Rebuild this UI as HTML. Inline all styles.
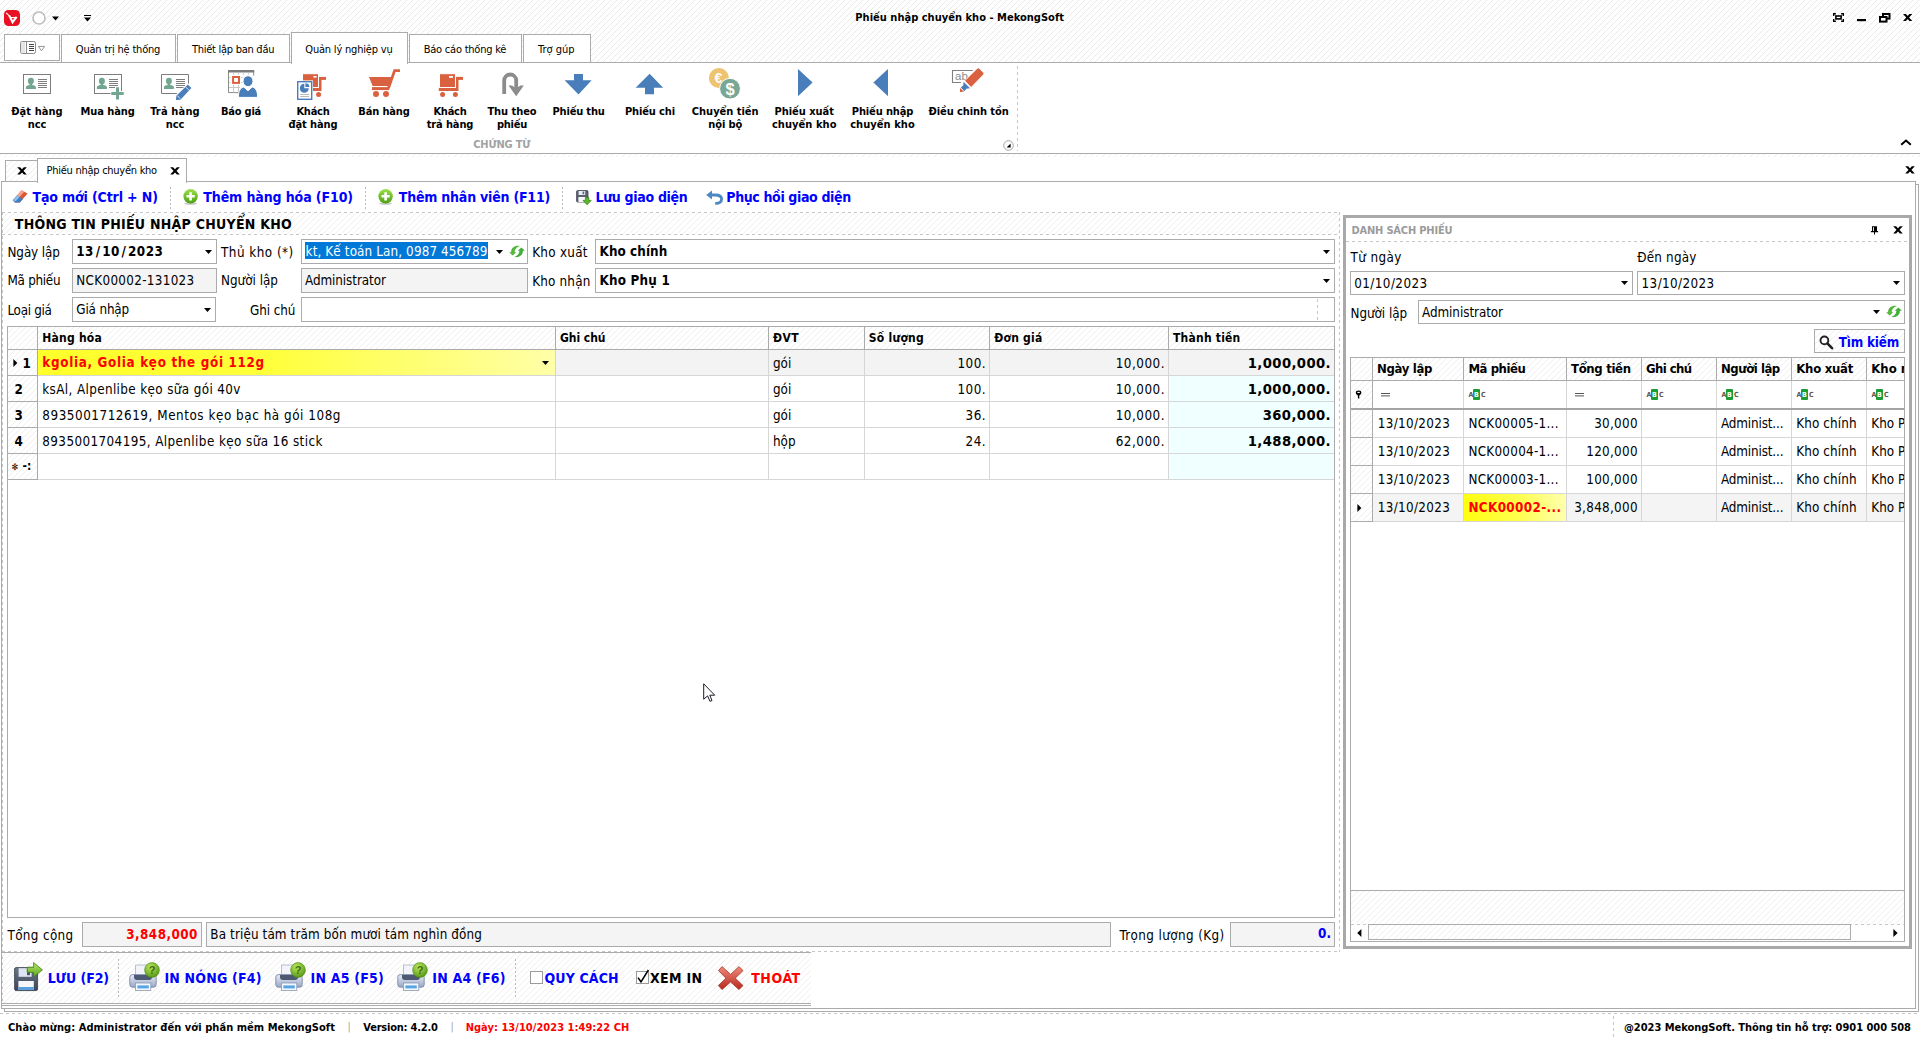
<!DOCTYPE html>
<html lang="vi">
<head>
<meta charset="utf-8">
<title>Phiếu nhập chuyển kho - MekongSoft</title>
<style>
html,body{margin:0;padding:0}
body{width:1920px;height:1039px;position:relative;overflow:hidden;background:#fff;font-family:"DejaVu Sans Condensed","DejaVu Sans","Liberation Sans",sans-serif;font-stretch:condensed;font-size:13.33px;color:#000}
body div,body svg,.t{position:absolute;box-sizing:border-box}
.t{line-height:20px;white-space:nowrap;display:block}
.t span{position:static}
.t i{font-style:normal;margin:0 1.7px}
.h{background-image:repeating-linear-gradient(135deg,transparent 0,transparent 3.18px,#e9e9e9 3.18px,#e9e9e9 3.89px,transparent 3.89px,transparent 4.2426px);background-attachment:fixed}
.h2{background-image:repeating-linear-gradient(135deg,transparent 0,transparent 3.18px,#efefef 3.18px,#efefef 3.89px,transparent 3.89px,transparent 4.2426px);background-attachment:fixed}
.vd2{width:1px;background-image:repeating-linear-gradient(180deg,#b9b9b9 0,#b9b9b9 2px,transparent 2px,transparent 4px)}
.hd{height:1px;background-image:repeating-linear-gradient(90deg,#c6c6c6 0,#c6c6c6 3px,transparent 3px,transparent 6px)}
.vd{width:1px;background-image:repeating-linear-gradient(180deg,#c6c6c6 0,#c6c6c6 3px,transparent 3px,transparent 6px)}
</style>
</head>
<body>
<header>
<div class="h" style="left:0px;top:0px;width:1920px;height:62px;"></div>
<svg style="left:4px;top:10px" width="16" height="16" viewBox="0 0 16 16"><rect x="0" y="0" width="16" height="16" rx="4.5" fill="#e81123"/><path d="M2.2 2.8l3.4 3.4" stroke="#fff" stroke-width="1.1"/><path d="M5.3 5.6l3.3 6.6 4-5.4" fill="none" stroke="#fff" stroke-width="2.1"/><path d="M6.6 7.6h4.6" stroke="#fff" stroke-width="1.1"/></svg>
<svg style="left:31px;top:10px" width="64" height="16" viewBox="0 0 64 16"><circle cx="8" cy="8" r="6" fill="#fff" stroke="#bdbdbd" stroke-width="1.6"/><path d="M21 6.5h7l-3.5 4z" fill="#000"/><path d="M53 5h7v1h-7zM53 7.5h7l-3.5 4z" fill="#000"/></svg>
<span class="t" id="t1" style="top:8px;font-size:11px;font-weight:bold;letter-spacing:0.022px;left:855.3px;">Phiếu nhập chuyển kho - MekongSoft</span>
<svg style="left:1830px;top:11px" width="84" height="13" viewBox="0 0 84 13"><g fill="none" stroke="#000" stroke-width="1.4"><path d="M3.7 4.9V2.7H5.9M11.1 2.7h2.2v2.2M3.7 8.1v2.2H5.9M11.1 10.3h2.2V8.1"/><rect x="5.9" y="5" width="5.2" height="2.9" stroke-width="1.6"/></g>
<rect x="27" y="8" width="9" height="2.2" fill="#000"/>
<g fill="none" stroke="#000" stroke-width="2"><rect x="53" y="3" width="6.5" height="4.6"/><rect x="50" y="6" width="6.5" height="4.6" fill="#fff"/></g>
<path d="M73 2.9h2.9l6.4 7.2h-2.9z"/><path d="M82.3 2.9h-2.9l-6.4 7.2h2.9z"/></svg>
</header>
<nav>
<div style="left:0px;top:62px;width:1920px;height:92px;background-color:#fff;border:1px solid #ababab;border-left:none;border-right:none;"></div>
<div style="left:4px;top:34px;width:56px;height:27px;background-color:#fff;border:1px solid #ababab;"></div>
<svg style="left:20px;top:41px" width="28" height="14" viewBox="0 0 28 14"><rect x="0.5" y="0.5" width="15" height="12" rx="1.8" fill="#fff" stroke="#8a8a8a"/><rect x="1" y="1" width="4" height="11" fill="#e6e6e6"/><path d="M6.5 1v11" stroke="#8a8a8a"/><path d="M9 3.5h5M9 5.5h5M9 7.5h5M9 9.5h5" stroke="#444" stroke-width="1"/><path d="M18.4 5.4h6.2l-3.1 4.4z" fill="#fff" stroke="#8a8a8a" stroke-width="0.9"/></svg>
<div style="left:61px;top:34px;width:115px;height:29px;background-color:#fff;border:1px solid #ababab;"></div>
<span class="t" id="t2" style="top:40px;font-size:11px;letter-spacing:-0.192px;left:75.8px;">Quản trị hệ thống</span>
<div style="left:177px;top:34px;width:113px;height:29px;background-color:#fff;border:1px solid #ababab;"></div>
<span class="t" id="t3" style="top:40px;font-size:11px;letter-spacing:-0.265px;left:191.9px;">Thiết lập ban đầu</span>
<div style="left:409px;top:34px;width:113px;height:29px;background-color:#fff;border:1px solid #ababab;"></div>
<span class="t" id="t4" style="top:40px;font-size:11px;letter-spacing:-0.225px;left:423.7px;">Báo cáo thống kê</span>
<div style="left:523px;top:34px;width:68px;height:29px;background-color:#fff;border:1px solid #ababab;"></div>
<span class="t" id="t5" style="top:40px;font-size:11px;left:538px;">Trợ gúp</span>
<div style="left:291px;top:32px;width:117px;height:32px;background-color:#fff;border:1px solid #ababab;border-bottom:none;"></div>
<span class="t" id="t6" style="top:40px;font-size:11px;letter-spacing:-0.195px;left:305.3px;">Quản lý nghiệp vụ</span>
<svg style="left:23px;top:74px" width="28" height="20" viewBox="0 0 28 20"><rect x="0.5" y="0.5" width="27" height="19" fill="#fff" stroke="#7d7d7d"/><ellipse cx="7.9" cy="7" rx="3" ry="3.2" fill="#73a691"/><path d="M6.6 9.4h2.6v1.6c2.2.3 3.7 1 3.7 2.2v1.7H2.9v-1.7c0-1.2 1.5-1.9 3.7-2.2z" fill="#73a691"/><path d="M15 5.5h9M15 7.5h9M15 9.5h9M15 11.5h9M15 13.5h9" stroke="#7d7d7d" stroke-width="1"/></svg>
<svg style="left:94px;top:74px" width="32" height="27" viewBox="0 0 32 27"><rect x="0.5" y="0.5" width="27" height="19" fill="#fff" stroke="#7d7d7d"/><ellipse cx="7.9" cy="7" rx="3" ry="3.2" fill="#73a691"/><path d="M6.6 9.4h2.6v1.6c2.2.3 3.7 1 3.7 2.2v1.7H2.9v-1.7c0-1.2 1.5-1.9 3.7-2.2z" fill="#73a691"/><path d="M15 5.5h9M15 7.5h9M15 9.5h9M15 11.5h9M15 13.5h9" stroke="#7d7d7d" stroke-width="1"/><path d="M16.5 19.4h14M23.5 12.4v14" stroke="#fff" stroke-width="5"/><path d="M17.3 19.4h12.4M23.5 13.2v12.4" stroke="#73a691" stroke-width="3"/></svg>
<svg style="left:161px;top:74px" width="32" height="27" viewBox="0 0 32 27"><path d="M27.5 9.6V0.5H0.5v19h16" fill="none" stroke="#7d7d7d"/><ellipse cx="7.9" cy="7" rx="3" ry="3.2" fill="#73a691"/><path d="M6.6 9.4h2.6v1.6c2.2.3 3.7 1 3.7 2.2v1.7H2.9v-1.7c0-1.2 1.5-1.9 3.7-2.2z" fill="#73a691"/><path d="M15 5.5h9M15 7.5h9M15 9.5h9M15 11.5h9M15 13.5h9" stroke="#7d7d7d" stroke-width="1"/><path d="M26.6 9.4l5 4.8L19.6 27l-6.2.4.6-6z" fill="#fff"/><path d="M26.9 10.6l3.5 3.3-11 11.8-4.5.4.5-4.4z" fill="#4a7ebb"/><path d="M24.9 13.2l3 3M16.3 21.6l3 3.1" stroke="#fff" stroke-width="0.8"/></svg>
<svg style="left:228px;top:70px" width="30" height="28" viewBox="0 0 30 28"><path d="M25.7 5.6V1H0.5v21.6h11.4" fill="none" stroke="#8c8c8c"/><rect x="0" y="0" width="26.2" height="2.5" fill="#7d7d7d"/><path d="M1 17.5h11M5.5 15v7.5M10.5 15v7.5" stroke="#c8c8c8" stroke-width="1"/><path d="M5.5 3v1.6M10.5 3v1.6M15.5 3v1.6M20.5 3v1.6M1 7.5h1.6M1 12.5h1.6M13 7.5h1.4M13 12.5h1.4" stroke="#c0c0c0" stroke-width="0.8"/><rect x="5.1" y="7" width="5.9" height="5.9" fill="#fff" stroke="#d9613f" stroke-width="2"/><path d="M10.6 27.4c-.6-6 1.6-9.4 5.2-10.4l4.2 3.8 4.2-3.8c3.6 1 5.8 4.4 5.2 10.4z" fill="#4a7ebb" stroke="#fff" stroke-width="1"/><ellipse cx="20" cy="11.2" rx="5" ry="5.5" fill="#4a7ebb" stroke="#fff" stroke-width="1"/></svg>
<svg style="left:297px;top:73px" width="32" height="28" viewBox="0 0 32 28"><path d="M21 5.4h8" stroke="#d9613f" stroke-width="3"/><path d="M23 4v14M16 16.5h8.5" stroke="#d9613f" stroke-width="3"/><rect x="5.5" y="0.7" width="16" height="13.8" fill="#d9613f" stroke="#fff" stroke-width="1"/><rect x="16.5" y="3" width="3" height="1.6" fill="#fff"/><circle cx="21.6" cy="21.6" r="2.5" fill="#d9613f"/><rect x="-0.6" y="7.4" width="16.6" height="20.2" fill="#fff"/><rect x="0.7" y="8.7" width="14" height="17.6" fill="#fff" stroke="#4a7ebb" stroke-width="1.4"/><path d="M7.3 15.2V10.7a4.5 4.5 0 1 0 4.5 4.5z" fill="#4a7ebb"/><path d="M8.4 14.1V10.2a4 4 0 0 1 4 3.9z" fill="#4a7ebb"/><path d="M3.2 21.5h9M3.2 23.5h9" stroke="#bbb" stroke-width="1"/></svg>
<svg style="left:368px;top:68px" width="34" height="30" viewBox="0 0 34 30"><path d="M1 9h24l-3.6 9H4.6z" fill="#d9613f"/><path d="M32 2.6h-5.4L20.4 20.2" fill="none" stroke="#d9613f" stroke-width="2.8"/><path d="M4 20.6h17.2" stroke="#d9613f" stroke-width="3"/><circle cx="8" cy="26" r="3" fill="#d9613f"/><circle cx="18" cy="26" r="3" fill="#d9613f"/></svg>
<svg style="left:438px;top:73px" width="28" height="26" viewBox="0 0 28 26"><path d="M17 5.4h8" stroke="#d9613f" stroke-width="3"/><path d="M19 4v14M0.8 16.5h19.7" stroke="#d9613f" stroke-width="3"/><rect x="1.5" y="0.7" width="16" height="13.8" fill="#d9613f" stroke="#fff" stroke-width="1"/><rect x="11" y="3" width="4" height="1.8" fill="#fff"/><circle cx="4.6" cy="21.6" r="2.5" fill="#d9613f"/><circle cx="17.4" cy="21.6" r="2.5" fill="#d9613f"/></svg>
<svg style="left:500px;top:70px" width="26" height="28" viewBox="0 0 26 28"><path d="M4.2 24V10.5a6 6 0 0 1 12 0V19" fill="none" stroke="#8c8c8c" stroke-width="3.8"/><path d="M8.6 15.4h3.4l4.2 3.2 4.2-3.2h3.4l-7.6 10.8z" fill="#8c8c8c"/></svg>
<svg style="left:564px;top:73px" width="30" height="23" viewBox="0 0 30 23"><path d="M10 1h9v6.3h8.6L14.5 21.4 0.6 7.3H10z" fill="#4a7ebb"/></svg>
<svg style="left:635px;top:73px" width="30" height="23" viewBox="0 0 30 23"><path d="M14.6 0.8L28.2 14.8H19v6.4h-9v-6.4H0.6z" fill="#4a7ebb"/></svg>
<svg style="left:708px;top:67px" width="34" height="33" viewBox="0 0 34 33"><circle cx="10.9" cy="11" r="10" fill="#eec26e"/><text x="10.4" y="15.6" font-family="Liberation Sans,sans-serif" font-weight="bold" font-size="14" fill="#fff" text-anchor="middle">€</text><circle cx="22" cy="21.7" r="10.4" fill="#78a795" stroke="#fff" stroke-width="1"/><text x="22" y="27.5" font-family="Liberation Sans,sans-serif" font-weight="bold" font-size="16.5" fill="#fff" text-anchor="middle">$</text></svg>
<svg style="left:797px;top:68px" width="17" height="30" viewBox="0 0 17 30"><path d="M1 1L15.6 14.6 1 28.3z" fill="#4a7ebb"/></svg>
<svg style="left:872px;top:68px" width="17" height="30" viewBox="0 0 17 30"><path d="M16 1L1.4 14.6 16 28.3z" fill="#4a7ebb"/></svg>
<svg style="left:951px;top:66px" width="36" height="28" viewBox="0 0 36 28"><path d="M21.8 4.5H1.5v12h8.4" fill="none" stroke="#808080" stroke-width="1.1"/><text x="4" y="13.8" font-family="Liberation Sans,sans-serif" font-size="11.5" fill="#8a8a8a">ab</text><path d="M26.2 2.4a1.6 1.6 0 0 1 2.2 0l4 4.2a1.6 1.6 0 0 1 0 2.2L20.1 21.4 13.6 14.8z" fill="#d9613f" stroke="#fff" stroke-width="0.8"/><path d="M12.6 15.8l6.4 6.5-3.6 0.4-2 2.6-3.6-3.7 2.4-2z" fill="#4a7ebb"/><path d="M9 21.9l4 3.9-4 0.2z" fill="#d9613f"/></svg>
<span class="t" style="top:102px;font-size:11px;font-weight:bold;letter-spacing:0.062px;left:-163px;width:400px;text-align:center;"><span id="t7">Đặt hàng</span></span>
<span class="t" style="top:115px;font-size:11px;font-weight:bold;letter-spacing:-0.060px;left:-163px;width:400px;text-align:center;"><span id="t8">ncc</span></span>
<span class="t" style="top:102px;font-size:11px;font-weight:bold;letter-spacing:-0.109px;left:-92.4px;width:400px;text-align:center;"><span id="t9">Mua hàng</span></span>
<span class="t" style="top:102px;font-size:11px;font-weight:bold;letter-spacing:0.162px;left:-25px;width:400px;text-align:center;"><span id="t10">Trả hàng</span></span>
<span class="t" style="top:115px;font-size:11px;font-weight:bold;letter-spacing:-0.060px;left:-25px;width:400px;text-align:center;"><span id="t11">ncc</span></span>
<span class="t" style="top:102px;font-size:11px;font-weight:bold;letter-spacing:-0.232px;left:41px;width:400px;text-align:center;"><span id="t12">Báo giá</span></span>
<span class="t" style="top:102px;font-size:11px;font-weight:bold;letter-spacing:-0.222px;left:113px;width:400px;text-align:center;"><span id="t13">Khách</span></span>
<span class="t" style="top:115px;font-size:11px;font-weight:bold;letter-spacing:-0.087px;left:113px;width:400px;text-align:center;"><span id="t14">đặt hàng</span></span>
<span class="t" style="top:102px;font-size:11px;font-weight:bold;letter-spacing:-0.145px;left:184px;width:400px;text-align:center;"><span id="t15">Bán hàng</span></span>
<span class="t" style="top:102px;font-size:11px;font-weight:bold;letter-spacing:-0.222px;left:250px;width:400px;text-align:center;"><span id="t16">Khách</span></span>
<span class="t" style="top:115px;font-size:11px;font-weight:bold;letter-spacing:-0.124px;left:250px;width:400px;text-align:center;"><span id="t17">trả hàng</span></span>
<span class="t" style="top:102px;font-size:11px;font-weight:bold;letter-spacing:-0.049px;left:312px;width:400px;text-align:center;"><span id="t18">Thu theo</span></span>
<span class="t" style="top:115px;font-size:11px;font-weight:bold;letter-spacing:-0.256px;left:312px;width:400px;text-align:center;"><span id="t19">phiếu</span></span>
<span class="t" style="top:102px;font-size:11px;font-weight:bold;letter-spacing:-0.169px;left:378.6px;width:400px;text-align:center;"><span id="t20">Phiếu thu</span></span>
<span class="t" style="top:102px;font-size:11px;font-weight:bold;letter-spacing:-0.134px;left:450px;width:400px;text-align:center;"><span id="t21">Phiếu chi</span></span>
<span class="t" style="top:102px;font-size:11px;font-weight:bold;letter-spacing:-0.019px;left:525.2px;width:400px;text-align:center;"><span id="t22">Chuyển tiền</span></span>
<span class="t" style="top:115px;font-size:11px;font-weight:bold;letter-spacing:-0.146px;left:525.2px;width:400px;text-align:center;"><span id="t23">nội bộ</span></span>
<span class="t" style="top:102px;font-size:11px;font-weight:bold;letter-spacing:-0.043px;left:604.2px;width:400px;text-align:center;"><span id="t24">Phiếu xuất</span></span>
<span class="t" style="top:115px;font-size:11px;font-weight:bold;letter-spacing:0.055px;left:604.2px;width:400px;text-align:center;"><span id="t25">chuyển kho</span></span>
<span class="t" style="top:102px;font-size:11px;font-weight:bold;letter-spacing:-0.125px;left:682.5px;width:400px;text-align:center;"><span id="t26">Phiếu nhập</span></span>
<span class="t" style="top:115px;font-size:11px;font-weight:bold;letter-spacing:0.055px;left:682.5px;width:400px;text-align:center;"><span id="t27">chuyển kho</span></span>
<span class="t" style="top:102px;font-size:11px;font-weight:bold;letter-spacing:-0.079px;left:768.6px;width:400px;text-align:center;"><span id="t28">Điều chinh tồn</span></span>
<span class="t" id="t29" style="top:135px;font-size:11px;font-weight:bold;color:#a2a2a2;letter-spacing:-0.211px;left:473.3px;">CHỨNG TỪ</span>
<svg style="left:1003px;top:140px" width="11" height="11" viewBox="0 0 11 11"><circle cx="5.5" cy="5.5" r="4.8" fill="#fff" stroke="#9a9a9a" stroke-width="0.9"/><path d="M7.6 3.6v4H3.6z" fill="#000"/></svg>
<div class="vd" style="left:1017px;top:66px;height:85px;"></div>
<svg style="left:1900px;top:139px" width="12" height="7" viewBox="0 0 12 7"><path d="M1.2 5.8L6 1.6l4.8 4.2" fill="none" stroke="#000" stroke-width="2"/></svg>
</nav>
<main>
<div class="h2" style="left:0px;top:154px;width:1920px;height:3px;"></div>
<div style="left:1px;top:181px;width:1915px;height:1px;background:#ababab"></div>
<div class="h2" style="left:5px;top:160px;width:33px;height:22px;background-color:#fff;border:1px solid #ababab;"></div>
<div style="left:37px;top:158px;width:150px;height:25px;background-color:#fff;border:1px solid #ababab;border-bottom:none;"></div>
<svg style="left:17px;top:167px" width="10" height="8" viewBox="0 0 10 8"><path d="M0.2 0.2H3.1L9.8 7.6H6.9Z"/><path d="M9.8 0.2H6.9L0.2 7.6H3.1Z"/></svg>
<svg style="left:170px;top:167px" width="10" height="8" viewBox="0 0 10 8"><path d="M0.2 0.2H3.1L9.8 7.6H6.9Z"/><path d="M9.8 0.2H6.9L0.2 7.6H3.1Z"/></svg>
<svg style="left:1905px;top:166px" width="10" height="8" viewBox="0 0 10 8"><path d="M0.2 0.2H3.1L9.8 7.6H6.9Z"/><path d="M9.8 0.2H6.9L0.2 7.6H3.1Z"/></svg>
<span class="t" id="t30" style="top:161px;font-size:11px;letter-spacing:-0.264px;left:46.5px;">Phiếu nhập chuyển kho</span>
<div style="left:1px;top:181px;width:1px;height:828px;background:#ababab"></div>
<div style="left:1915px;top:181px;width:1px;height:828px;background:#ababab"></div>
<div style="left:1px;top:1008px;width:1915px;height:1px;background:#ababab"></div>
<div style="left:1918px;top:184px;width:1px;height:828px;background:#ababab"></div>
<div style="left:4px;top:1011px;width:1915px;height:1px;background:#ababab"></div>
<div style="left:4px;top:1008px;width:1px;height:4px;background:#ababab"></div>
<div style="left:1915px;top:184px;width:4px;height:1px;background:#ababab"></div>
<svg style="left:12px;top:189px" width="17" height="15" viewBox="0 0 17 15"><path d="M9.6 1.2L15.6 4.6 7.8 13.4 3 13.6 0.8 11.2z" fill="#d9583c"/><path d="M9.6 1.2l2.6 1.5-8.4 9.6-3-1.1z" fill="#f3a58e"/><path d="M5 6.6l6 3.4-3.2 3.4L3 13.6 0.8 11.2z" fill="#3f7fc4"/><path d="M5 6.6l2.5 1.4-3.8 4.3-2.9-1.1z" fill="#8cc0ee"/></svg>
<span class="t" id="t31" style="top:187px;font-size:14px;font-weight:bold;color:#0000ff;letter-spacing:-0.137px;left:32.5px;">Tạo mới (Ctrl + N)</span>
<div class="vd2" style="left:170px;top:187px;height:22px;"></div>
<svg style="left:183px;top:189px" width="16" height="16" viewBox="0 0 16 16"><defs><linearGradient id="gp183" x1="0" y1="0" x2="0" y2="1"><stop offset="0" stop-color="#9be04a"/><stop offset="1" stop-color="#4c9f12"/></linearGradient></defs><ellipse cx="7.6" cy="14.6" rx="6.4" ry="1.2" fill="#c8c8c8"/><circle cx="7.6" cy="7.3" r="7.2" fill="url(#gp183)"/><path d="M7.6 3.2v8.2M3.5 7.3h8.2" stroke="#fff" stroke-width="2.6"/></svg>
<span class="t" id="t32" style="top:187px;font-size:14px;font-weight:bold;color:#0000ff;letter-spacing:-0.100px;left:203.3px;">Thêm hàng hóa (F10)</span>
<div class="vd2" style="left:365px;top:187px;height:22px;"></div>
<svg style="left:378px;top:189px" width="16" height="16" viewBox="0 0 16 16"><defs><linearGradient id="gp378" x1="0" y1="0" x2="0" y2="1"><stop offset="0" stop-color="#9be04a"/><stop offset="1" stop-color="#4c9f12"/></linearGradient></defs><ellipse cx="7.6" cy="14.6" rx="6.4" ry="1.2" fill="#c8c8c8"/><circle cx="7.6" cy="7.3" r="7.2" fill="url(#gp378)"/><path d="M7.6 3.2v8.2M3.5 7.3h8.2" stroke="#fff" stroke-width="2.6"/></svg>
<span class="t" id="t33" style="top:187px;font-size:14px;font-weight:bold;color:#0000ff;letter-spacing:-0.213px;left:398.8px;">Thêm nhân viên (F11)</span>
<div class="vd2" style="left:562px;top:187px;height:22px;"></div>
<svg style="left:576px;top:190px" width="16" height="15" viewBox="0 0 16 15"><rect x="0.6" y="0.6" width="11.4" height="11.4" rx="1" fill="#5a6270" stroke="#3d4450" stroke-width="0.8"/><rect x="2.6" y="1" width="6.6" height="4" fill="#e8edf5"/><rect x="6.6" y="1.6" width="1.6" height="2.6" fill="#5a6270"/><rect x="2.4" y="7" width="7.6" height="5" fill="#f4f6fa"/><path d="M9.4 7.4h3.4v3h2.4l-4.1 4.4L7 10.4h2.4z" fill="#5cb82a" stroke="#2f7d0c" stroke-width="0.7"/></svg>
<span class="t" id="t34" style="top:187px;font-size:14px;font-weight:bold;color:#0000ff;letter-spacing:-0.312px;left:595.5px;">Lưu giao diện</span>
<svg style="left:705px;top:190px" width="18" height="15" viewBox="0 0 18 15"><path d="M1.2 5L7 0.4V9.6z" fill="#4d88c4"/><path d="M6 5h4.6c4 0 6 2 6 4.3 0 2.5-2.2 4.2-6.4 4" fill="none" stroke="#4d88c4" stroke-width="2.8"/></svg>
<span class="t" id="t35" style="top:187px;font-size:14px;font-weight:bold;color:#0000ff;letter-spacing:-0.364px;left:726.3px;">Phục hồi giao diện</span>
<div class="hd" style="left:2px;top:212px;width:1338px;"></div>
<div class="vd" style="left:1339px;top:212px;height:740px;"></div>
<div class="vd" style="left:2px;top:212px;height:792px;"></div>
<div class="hd" style="left:2px;top:234px;width:1338px;"></div>
<div class="h2" style="left:3px;top:213px;width:1336px;height:21px;"></div>
<span class="t" id="t36" style="top:214px;font-size:14px;font-weight:bold;letter-spacing:0.262px;left:14.8px;">THÔNG TIN PHIẾU NHẬP CHUYỂN KHO</span>
<span class="t" id="t37" style="top:243px;font-size:13.33px;letter-spacing:-0.103px;left:7.5px;">Ngày lập</span>
<div style="left:72px;top:239px;width:145px;height:25px;background-color:#fff;border:1px solid #ababab;"></div>
<span class="t" id="t38" style="top:242px;font-size:13.33px;font-weight:bold;letter-spacing:0.472px;left:76.3px;">13<i>/</i>10<i>/</i>2023</span>
<svg style="left:205px;top:250px" width="7" height="4" viewBox="0 0 7 4"><path d="M0 0h7l-3.5 4z" fill="#000"/></svg>
<span class="t" id="t39" style="top:243px;font-size:13.33px;letter-spacing:0.484px;left:221px;">Thủ kho (*)</span>
<div style="left:301px;top:239px;width:227px;height:25px;background-color:#fff;border:1px solid #ababab;"></div>
<div style="left:305px;top:242px;width:183px;height:17px;background-color:#0078d7;"></div>
<span class="t" id="t40" style="top:242px;font-size:13.33px;color:#fff;letter-spacing:0.129px;left:305.6px;width:182.4px;overflow:hidden;">kt, Kế toán Lan, 0987 456789</span>
<svg style="left:496px;top:250px" width="7" height="4" viewBox="0 0 7 4"><path d="M0 0h7l-3.5 4z" fill="#000"/></svg>
<svg style="left:509px;top:245px" width="16" height="13" viewBox="0 0 16 13"><path d="M10.9 1C6 0.2 2 2.6 2.1 7.2H0.1L3.6 10.6 7.3 7.2H5.6C5.6 4.4 7.6 2 10.9 1Z" fill="#55b63c"/><path d="M5.1 12C10 12.8 14 10.4 13.9 5.8H15.9L12.4 2.4 8.7 5.8H10.4C10.4 8.6 8.4 11 5.1 12Z" fill="#43ae3c"/></svg>
<span class="t" id="t41" style="top:243px;font-size:13.33px;letter-spacing:0.280px;left:532.2px;">Kho xuất</span>
<div style="left:595px;top:239px;width:740px;height:25px;background-color:#fff;border:1px solid #ababab;"></div>
<span class="t" id="t42" style="top:242px;font-size:13.33px;font-weight:bold;letter-spacing:0.069px;left:599.6px;">Kho chính</span>
<svg style="left:1323px;top:250px" width="7" height="4" viewBox="0 0 7 4"><path d="M0 0h7l-3.5 4z" fill="#000"/></svg>
<span class="t" id="t43" style="top:271px;font-size:13.33px;letter-spacing:-0.291px;left:7.5px;">Mã phiếu</span>
<div style="left:72px;top:268px;width:145px;height:25px;background-color:#f4f4f4;border:1px solid #ababab;"></div>
<span class="t" id="t44" style="top:271px;font-size:13.33px;letter-spacing:0.318px;left:76.3px;">NCK00002-131023</span>
<span class="t" id="t45" style="top:271px;font-size:13.33px;left:221px;">Người lập</span>
<div style="left:301px;top:268px;width:227px;height:25px;background-color:#f4f4f4;border:1px solid #ababab;"></div>
<span class="t" id="t46" style="top:271px;font-size:13.33px;letter-spacing:-0.071px;left:305px;">Administrator</span>
<span class="t" id="t47" style="top:272px;font-size:13.33px;letter-spacing:0.192px;left:532.2px;">Kho nhận</span>
<div style="left:595px;top:268px;width:740px;height:25px;background-color:#fff;border:1px solid #ababab;"></div>
<span class="t" id="t48" style="top:271px;font-size:13.33px;font-weight:bold;letter-spacing:0.197px;left:599.6px;">Kho Phụ 1</span>
<svg style="left:1323px;top:279px" width="7" height="4" viewBox="0 0 7 4"><path d="M0 0h7l-3.5 4z" fill="#000"/></svg>
<span class="t" id="t49" style="top:301px;font-size:13.33px;letter-spacing:-0.320px;left:7.5px;">Loại giá</span>
<div style="left:72px;top:297px;width:144px;height:25px;background-color:#fff;border:1px solid #ababab;"></div>
<span class="t" id="t50" style="top:300px;font-size:13.33px;letter-spacing:-0.157px;left:76.3px;">Giá nhập</span>
<svg style="left:204px;top:308px" width="7" height="4" viewBox="0 0 7 4"><path d="M0 0h7l-3.5 4z" fill="#000"/></svg>
<span class="t" id="t51" style="top:301px;font-size:13.33px;letter-spacing:-0.078px;left:250px;">Ghi chú</span>
<div style="left:301px;top:297px;width:1034px;height:25px;background-color:#fff;border:1px solid #ababab;"></div>
<div class="vd" style="left:1317px;top:299px;height:21px;"></div>
<div style="left:7px;top:326px;width:1328px;height:592px;background-color:#fff;border:1px solid #ababab;"></div>
<div class="h2" style="left:8px;top:327px;width:1326px;height:22px;"></div>
<div class="h2" style="left:8px;top:350px;width:29px;height:129px;"></div>
<div style="left:38px;top:350px;width:1296px;height:25px;background-color:#f3f3f3;"></div>
<div style="left:1169px;top:376px;width:165px;height:103px;background-color:#f0ffff;"></div>
<div style="left:38px;top:350px;width:517px;height:25px;background:linear-gradient(90deg,#ffff2a 0%,#ffff3c 45%,#ffffa8 100%);"></div>
<div style="left:8px;top:375px;width:1326px;height:1px;background:#d6d6d6"></div>
<div style="left:8px;top:401px;width:1326px;height:1px;background:#d6d6d6"></div>
<div style="left:8px;top:427px;width:1326px;height:1px;background:#d6d6d6"></div>
<div style="left:8px;top:453px;width:1326px;height:1px;background:#d6d6d6"></div>
<div style="left:8px;top:479px;width:1326px;height:1px;background:#d6d6d6"></div>
<div style="left:555px;top:350px;width:1px;height:130px;background:#d6d6d6"></div>
<div style="left:768px;top:350px;width:1px;height:130px;background:#d6d6d6"></div>
<div style="left:864px;top:350px;width:1px;height:130px;background:#d6d6d6"></div>
<div style="left:989px;top:350px;width:1px;height:130px;background:#d6d6d6"></div>
<div style="left:1168px;top:350px;width:1px;height:130px;background:#d6d6d6"></div>
<div style="left:8px;top:349px;width:1326px;height:1px;background:#ababab"></div>
<div style="left:37px;top:327px;width:1px;height:153px;background:#ababab"></div>
<div style="left:555px;top:327px;width:1px;height:23px;background:#ababab"></div>
<div style="left:768px;top:327px;width:1px;height:23px;background:#ababab"></div>
<div style="left:864px;top:327px;width:1px;height:23px;background:#ababab"></div>
<div style="left:989px;top:327px;width:1px;height:23px;background:#ababab"></div>
<div style="left:1168px;top:327px;width:1px;height:23px;background:#ababab"></div>
<div style="left:8px;top:375px;width:30px;height:1px;background:#ababab"></div>
<div style="left:8px;top:401px;width:30px;height:1px;background:#ababab"></div>
<div style="left:8px;top:427px;width:30px;height:1px;background:#ababab"></div>
<div style="left:8px;top:453px;width:30px;height:1px;background:#ababab"></div>
<div style="left:8px;top:479px;width:30px;height:1px;background:#ababab"></div>
<span class="t" id="t52" style="top:328px;font-size:12px;font-weight:bold;letter-spacing:0.226px;left:42.3px;">Hàng hóa</span>
<span class="t" id="t53" style="top:328px;font-size:12px;font-weight:bold;letter-spacing:-0.040px;left:560px;">Ghi chú</span>
<span class="t" id="t54" style="top:328px;font-size:12px;font-weight:bold;letter-spacing:0.406px;left:773px;">ĐVT</span>
<span class="t" id="t55" style="top:328px;font-size:12px;font-weight:bold;letter-spacing:0.254px;left:868.8px;">Số lượng</span>
<span class="t" id="t56" style="top:328px;font-size:12px;font-weight:bold;letter-spacing:0.211px;left:994.3px;">Đơn giá</span>
<span class="t" id="t57" style="top:328px;font-size:12px;font-weight:bold;letter-spacing:0.216px;left:1173px;">Thành tiền</span>
<svg style="left:13px;top:359px" width="5" height="8" viewBox="0 0 5 8"><path d="M0.4 0L4.4 4 0.4 8z" fill="#000"/></svg>
<span class="t" id="t58" style="top:354px;font-size:13.33px;font-weight:bold;left:22.6px;">1</span>
<span class="t" id="t59" style="top:380px;font-size:13.33px;font-weight:bold;left:14.4px;">2</span>
<span class="t" id="t60" style="top:406px;font-size:13.33px;font-weight:bold;left:14.4px;">3</span>
<span class="t" id="t61" style="top:432px;font-size:13.33px;font-weight:bold;left:14.4px;">4</span>
<span class="t" id="t62" style="top:457px;font-size:9px;left:11.5px;">✻</span>
<span class="t" id="t63" style="top:456px;font-size:12px;font-weight:bold;left:22.5px;">-:</span>
<span class="t" id="t64" style="top:353px;font-size:13.33px;font-weight:bold;color:#f00;letter-spacing:0.680px;left:42.3px;">kgolia, Golia kẹo the gói 112g</span>
<svg style="left:542px;top:361px" width="7" height="4" viewBox="0 0 7 4"><path d="M0 0h7l-3.5 4z" fill="#000"/></svg>
<span class="t" id="t65" style="top:380px;font-size:13.33px;letter-spacing:0.376px;left:42.3px;">ksAl, Alpenlibe kẹo sữa gói 40v</span>
<span class="t" id="t66" style="top:406px;font-size:13.33px;letter-spacing:0.545px;left:42.3px;">8935001712619, Mentos kẹo bạc hà gói 108g</span>
<span class="t" id="t67" style="top:432px;font-size:13.33px;letter-spacing:0.409px;left:42.3px;">8935001704195, Alpenlibe kẹo sữa 16 stick</span>
<span class="t" id="t68" style="top:354px;font-size:13.33px;left:773px;">gói</span>
<span class="t" id="t69" style="top:354px;font-size:13.33px;letter-spacing:0.500px;right:933.90px;">100.</span>
<span class="t" id="t70" style="top:354px;font-size:13.33px;letter-spacing:0.500px;right:755.00px;">10,000.</span>
<span class="t" id="t71" style="top:353px;font-size:14.67px;font-weight:bold;letter-spacing:0.400px;right:589.00px;">1,000,000.</span>
<span class="t" id="t72" style="top:380px;font-size:13.33px;left:773px;">gói</span>
<span class="t" id="t73" style="top:380px;font-size:13.33px;letter-spacing:0.500px;right:933.90px;">100.</span>
<span class="t" id="t74" style="top:380px;font-size:13.33px;letter-spacing:0.500px;right:755.00px;">10,000.</span>
<span class="t" id="t75" style="top:379px;font-size:14.67px;font-weight:bold;letter-spacing:0.400px;right:589.00px;">1,000,000.</span>
<span class="t" id="t76" style="top:406px;font-size:13.33px;left:773px;">gói</span>
<span class="t" id="t77" style="top:406px;font-size:13.33px;letter-spacing:0.500px;right:933.90px;">36.</span>
<span class="t" id="t78" style="top:406px;font-size:13.33px;letter-spacing:0.500px;right:755.00px;">10,000.</span>
<span class="t" id="t79" style="top:405px;font-size:14.67px;font-weight:bold;letter-spacing:0.400px;right:589.00px;">360,000.</span>
<span class="t" id="t80" style="top:432px;font-size:13.33px;left:773px;">hộp</span>
<span class="t" id="t81" style="top:432px;font-size:13.33px;letter-spacing:0.500px;right:933.90px;">24.</span>
<span class="t" id="t82" style="top:432px;font-size:13.33px;letter-spacing:0.500px;right:755.00px;">62,000.</span>
<span class="t" id="t83" style="top:431px;font-size:14.67px;font-weight:bold;letter-spacing:0.400px;right:589.00px;">1,488,000.</span>
<span class="t" id="t84" style="top:926px;font-size:13.33px;letter-spacing:0.352px;left:7.5px;">Tổng cộng</span>
<div style="left:82px;top:922px;width:120px;height:25px;background-color:#f4f4f4;border:1px solid #ababab;"></div>
<span class="t" id="t85" style="top:925px;font-size:13.33px;font-weight:bold;color:#f00;letter-spacing:0.450px;right:1722.15px;">3,848,000</span>
<div style="left:206px;top:922px;width:905px;height:25px;background-color:#f4f4f4;border:1px solid #ababab;"></div>
<span class="t" id="t86" style="top:925px;font-size:13.33px;letter-spacing:0.127px;left:210.3px;">Ba triệu tám trăm bốn mươi tám nghìn đồng</span>
<span class="t" id="t87" style="top:926px;font-size:13.33px;letter-spacing:0.401px;left:1119.5px;">Trọng lượng (Kg)</span>
<div style="left:1230px;top:922px;width:105px;height:25px;background-color:#f4f4f4;border:1px solid #ababab;"></div>
<span class="t" id="t88" style="top:924px;font-size:13.33px;font-weight:bold;color:#0000ff;right:589.00px;">0.</span>
<div class="hd" style="left:2px;top:951px;width:1338px;"></div>
<div class="h2" style="left:2px;top:952px;width:809px;height:51px;"></div>
<div style="left:2px;top:952px;width:809px;height:1px;background:#ababab"></div>
<div style="left:2px;top:1003px;width:809px;height:1px;background:#ababab"></div>
<div style="left:2px;top:1005px;width:809px;height:1px;background:#ababab"></div>
<div class="vd2" style="left:118px;top:959px;height:40px;"></div>
<div class="vd2" style="left:515px;top:959px;height:40px;"></div>
<svg style="left:14px;top:962px" width="30" height="30" viewBox="0 0 30 30"><defs><linearGradient id="fl" x1="0" y1="0" x2="0" y2="1"><stop offset="0" stop-color="#6b7689"/><stop offset="1" stop-color="#3d4657"/></linearGradient><linearGradient id="ga" x1="0" y1="0" x2="0" y2="1"><stop offset="0" stop-color="#b6e86a"/><stop offset="1" stop-color="#5aa51c"/></linearGradient></defs><rect x="0.6" y="5.6" width="23" height="23" rx="1.6" fill="url(#fl)" stroke="#333b49" stroke-width="0.8"/><rect x="4.6" y="6.2" width="13" height="8.6" fill="#dfe6f2"/><rect x="13" y="7.2" width="3" height="6" fill="#4a5568"/><rect x="4.4" y="19" width="15.4" height="9" fill="#f5f7fb"/><rect x="4.4" y="25" width="15.4" height="3" fill="#5a9fdc"/><path d="M13.2 5.2h6.4V0.6l8.8 7.2-8.8 7.2v-4.6h-6.4z" fill="url(#ga)" stroke="#3c7d0e" stroke-width="0.8"/></svg>
<span class="t" id="t89" style="top:968px;font-size:14px;font-weight:bold;color:#0000ff;letter-spacing:-0.093px;left:47.7px;">LƯU (F2)</span>
<svg style="left:129px;top:962px" width="32" height="30" viewBox="0 0 32 30"><defs><linearGradient id="pr1" x1="0" y1="0" x2="0" y2="1"><stop offset="0" stop-color="#e9edf6"/><stop offset="1" stop-color="#98a7c6"/></linearGradient><radialGradient id="pq1" cx="0.4" cy="0.3" r="0.8"><stop offset="0" stop-color="#b9e85c"/><stop offset="1" stop-color="#4c9010"/></radialGradient></defs><rect x="6.6" y="3" width="14" height="12" fill="#f2f4fa" stroke="#a8b2c8" stroke-width="0.8"/><rect x="0.8" y="12.6" width="26.4" height="12.6" rx="2.6" fill="url(#pr1)" stroke="#7a88a8" stroke-width="0.9"/><path d="M5 13h18v2.6a2.4 2.4 0 0 1-2.4 2.4H7.4A2.4 2.4 0 0 1 5 15.6z" fill="#4d5872"/><rect x="6.4" y="21" width="15.4" height="7.4" fill="#f4f7fc" stroke="#8a96b2" stroke-width="0.8"/><rect x="8.4" y="23.4" width="11.4" height="3" fill="#58a6e0"/><circle cx="23" cy="8" r="7.4" fill="url(#pq1)" stroke="#4f8a14" stroke-width="0.6"/><text x="23" y="12" font-family="Liberation Sans,sans-serif" font-weight="bold" font-size="11" fill="#3d6a0c" text-anchor="middle">?</text></svg>
<span class="t" id="t90" style="top:968px;font-size:14px;font-weight:bold;color:#0000ff;letter-spacing:0.192px;left:164.4px;">IN NÓNG (F4)</span>
<svg style="left:275px;top:962px" width="32" height="30" viewBox="0 0 32 30"><defs><linearGradient id="pr2" x1="0" y1="0" x2="0" y2="1"><stop offset="0" stop-color="#e9edf6"/><stop offset="1" stop-color="#98a7c6"/></linearGradient><radialGradient id="pq2" cx="0.4" cy="0.3" r="0.8"><stop offset="0" stop-color="#b9e85c"/><stop offset="1" stop-color="#4c9010"/></radialGradient></defs><rect x="6.6" y="3" width="14" height="12" fill="#f2f4fa" stroke="#a8b2c8" stroke-width="0.8"/><rect x="0.8" y="12.6" width="26.4" height="12.6" rx="2.6" fill="url(#pr2)" stroke="#7a88a8" stroke-width="0.9"/><path d="M5 13h18v2.6a2.4 2.4 0 0 1-2.4 2.4H7.4A2.4 2.4 0 0 1 5 15.6z" fill="#4d5872"/><rect x="6.4" y="21" width="15.4" height="7.4" fill="#f4f7fc" stroke="#8a96b2" stroke-width="0.8"/><rect x="8.4" y="23.4" width="11.4" height="3" fill="#58a6e0"/><circle cx="23" cy="8" r="7.4" fill="url(#pq2)" stroke="#4f8a14" stroke-width="0.6"/><text x="23" y="12" font-family="Liberation Sans,sans-serif" font-weight="bold" font-size="11" fill="#3d6a0c" text-anchor="middle">?</text></svg>
<span class="t" id="t91" style="top:968px;font-size:14px;font-weight:bold;color:#0000ff;letter-spacing:0.211px;left:310.5px;">IN A5 (F5)</span>
<svg style="left:397px;top:962px" width="32" height="30" viewBox="0 0 32 30"><defs><linearGradient id="pr3" x1="0" y1="0" x2="0" y2="1"><stop offset="0" stop-color="#e9edf6"/><stop offset="1" stop-color="#98a7c6"/></linearGradient><radialGradient id="pq3" cx="0.4" cy="0.3" r="0.8"><stop offset="0" stop-color="#b9e85c"/><stop offset="1" stop-color="#4c9010"/></radialGradient></defs><rect x="6.6" y="3" width="14" height="12" fill="#f2f4fa" stroke="#a8b2c8" stroke-width="0.8"/><rect x="0.8" y="12.6" width="26.4" height="12.6" rx="2.6" fill="url(#pr3)" stroke="#7a88a8" stroke-width="0.9"/><path d="M5 13h18v2.6a2.4 2.4 0 0 1-2.4 2.4H7.4A2.4 2.4 0 0 1 5 15.6z" fill="#4d5872"/><rect x="6.4" y="21" width="15.4" height="7.4" fill="#f4f7fc" stroke="#8a96b2" stroke-width="0.8"/><rect x="8.4" y="23.4" width="11.4" height="3" fill="#58a6e0"/><circle cx="23" cy="8" r="7.4" fill="url(#pq3)" stroke="#4f8a14" stroke-width="0.6"/><text x="23" y="12" font-family="Liberation Sans,sans-serif" font-weight="bold" font-size="11" fill="#3d6a0c" text-anchor="middle">?</text></svg>
<span class="t" id="t92" style="top:968px;font-size:14px;font-weight:bold;color:#0000ff;letter-spacing:0.211px;left:432.3px;">IN A4 (F6)</span>
<div style="left:530px;top:971px;width:13px;height:13px;background-color:#fff;border:1px solid #9a9a9a;"></div>
<span class="t" id="t93" style="top:968px;font-size:14px;font-weight:bold;color:#0000ff;letter-spacing:0.123px;left:544.5px;">QUY CÁCH</span>
<div style="left:636px;top:971px;width:13px;height:13px;background-color:#fff;border:1px solid #9a9a9a;"></div>
<svg style="left:636px;top:968px" width="14" height="16" viewBox="0 0 14 16"><path d="M2 9.6l3 4.2L12.4 2" fill="none" stroke="#000" stroke-width="1.5"/></svg>
<span class="t" id="t94" style="top:968px;font-size:14px;font-weight:bold;letter-spacing:0.339px;left:650px;">XEM IN</span>
<svg style="left:717px;top:965px" width="28" height="26" viewBox="0 0 28 26"><defs><linearGradient id="rx" x1="0" y1="0" x2="0" y2="1"><stop offset="0" stop-color="#ee8a7c"/><stop offset="1" stop-color="#b8281c"/></linearGradient></defs><path d="M5 1.6L13.6 9.4 22 1.6 26 5.6 18.2 13.2 26 20.6 22 24.6 13.6 17 5 24.6 1.4 20.6 9 13.2 1.4 5.6z" fill="url(#rx)" stroke="#a33226" stroke-width="0.8" stroke-linejoin="round"/></svg>
<span class="t" id="t95" style="top:968px;font-size:14px;font-weight:bold;color:#f00;letter-spacing:0.576px;left:751.2px;">THOÁT</span>
</main>
<footer>
<div class="hd" style="left:0px;top:1013px;width:1920px;"></div>
<span class="t" id="t96" style="top:1018px;font-size:11px;font-weight:bold;letter-spacing:0.053px;left:8px;">Chào mừng: Administrator đến với phần mềm MekongSoft</span>
<span class="t" id="t97" style="top:1017px;font-size:11px;color:#aaa;left:347.5px;">|</span>
<span class="t" id="t98" style="top:1018px;font-size:11px;font-weight:bold;letter-spacing:-0.212px;left:363.3px;">Version: 4.2.0</span>
<span class="t" id="t99" style="top:1017px;font-size:11px;color:#aaa;left:450.5px;">|</span>
<span class="t" id="t100" style="top:1018px;font-size:11px;font-weight:bold;color:#f00;letter-spacing:0.035px;left:465.7px;">Ngày: 13/10/2023 1:49:22 CH</span>
<div class="vd" style="left:1613px;top:1016px;height:22px;"></div>
<span class="t" id="t101" style="top:1018px;font-size:11px;font-weight:bold;letter-spacing:-0.031px;left:1624px;">@2023 MekongSoft. Thông tin hỗ trợ: 0901 000 508</span>
</footer>
<svg style="left:703px;top:683px" width="13" height="20" viewBox="0 0 13 20"><path d="M0.7 0.8V16.2L4.6 12.9 7 18.4 9 17.5 6.8 12.2H11.7z" fill="#fff" stroke="#1a1a26" stroke-width="1" stroke-linejoin="round"/></svg>
<aside>
<div style="left:1343px;top:215px;width:569px;height:734px;background-color:#fff;border:3px solid #a9a9a9;"></div>
<span class="t" id="t102" style="top:221px;font-size:11px;font-weight:bold;color:#9b9b9b;letter-spacing:-0.178px;left:1351.4px;">DANH SÁCH PHIẾU</span>
<svg style="left:1870px;top:226px" width="9" height="9" viewBox="0 0 9 9"><path d="M2 0.2h5v4.9h1.1v1.1H5v2.4H4V6.2H0.9V5.1H2z" fill="#000"/><rect x="3" y="1.2" width="0.9" height="3.8" fill="#fff"/></svg>
<svg style="left:1893px;top:226px" width="10" height="8" viewBox="0 0 10 8"><path d="M0.2 0.2H3.1L9.8 7.6H6.9Z"/><path d="M9.8 0.2H6.9L0.2 7.6H3.1Z"/></svg>
<div class="hd" style="left:1346px;top:241px;width:563px;"></div>
<span class="t" id="t103" style="top:248px;font-size:13.33px;letter-spacing:0.401px;left:1350.6px;">Từ ngày</span>
<span class="t" id="t104" style="top:248px;font-size:13.33px;letter-spacing:0.206px;left:1637.2px;">Đến ngày</span>
<div style="left:1350px;top:271px;width:283px;height:24px;background-color:#fff;border:1px solid #ababab;"></div>
<span class="t" id="t105" style="top:274px;font-size:13.33px;letter-spacing:0.429px;left:1354.2px;">01/10/2023</span>
<svg style="left:1621px;top:281px" width="7" height="4" viewBox="0 0 7 4"><path d="M0 0h7l-3.5 4z" fill="#000"/></svg>
<div style="left:1637px;top:271px;width:268px;height:24px;background-color:#fff;border:1px solid #ababab;"></div>
<span class="t" id="t106" style="top:274px;font-size:13.33px;letter-spacing:0.389px;left:1641.6px;">13/10/2023</span>
<svg style="left:1893px;top:281px" width="7" height="4" viewBox="0 0 7 4"><path d="M0 0h7l-3.5 4z" fill="#000"/></svg>
<span class="t" id="t107" style="top:304px;font-size:13.33px;letter-spacing:-0.061px;left:1350.6px;">Người lập</span>
<div style="left:1418px;top:300px;width:487px;height:24px;background-color:#fff;border:1px solid #ababab;"></div>
<span class="t" id="t108" style="top:303px;font-size:13.33px;letter-spacing:-0.055px;left:1422px;">Administrator</span>
<svg style="left:1873px;top:310px" width="7" height="4" viewBox="0 0 7 4"><path d="M0 0h7l-3.5 4z" fill="#000"/></svg>
<svg style="left:1886px;top:305px" width="16" height="13" viewBox="0 0 16 13"><path d="M10.9 1C6 0.2 2 2.6 2.1 7.2H0.1L3.6 10.6 7.3 7.2H5.6C5.6 4.4 7.6 2 10.9 1Z" fill="#55b63c"/><path d="M5.1 12C10 12.8 14 10.4 13.9 5.8H15.9L12.4 2.4 8.7 5.8H10.4C10.4 8.6 8.4 11 5.1 12Z" fill="#43ae3c"/></svg>
<div class="h2" style="left:1814px;top:329px;width:91px;height:24px;background-color:#fff;border:1px solid #ababab;"></div>
<svg style="left:1819px;top:335px" width="15" height="15" viewBox="0 0 15 15"><circle cx="5.4" cy="5.4" r="3.9" fill="#fff" stroke="#222" stroke-width="1.9"/><path d="M8.4 8.4l4.6 4.8" stroke="#222" stroke-width="2.6" stroke-linecap="round"/></svg>
<span class="t" id="t109" style="top:333px;font-size:13.33px;font-weight:bold;color:#0000ff;letter-spacing:-0.184px;left:1838.8px;">Tìm kiếm</span>
<div style="left:1350px;top:357px;width:555px;height:585px;background-color:#fff;border:1px solid #ababab;"></div>
<div class="h2" style="left:1351px;top:358px;width:553px;height:22px;"></div>
<div class="h2" style="left:1351px;top:381px;width:21px;height:140px;"></div>
<div style="left:1373px;top:494px;width:531px;height:27px;background-color:#f4f4f4;"></div>
<div style="left:1464px;top:494px;width:102px;height:27px;background:linear-gradient(90deg,#ffff10 0%,#ffff50 55%,#ffffb0 100%);"></div>
<div style="left:1351px;top:437px;width:553px;height:1px;background:#d6d6d6"></div>
<div style="left:1351px;top:465px;width:553px;height:1px;background:#d6d6d6"></div>
<div style="left:1351px;top:493px;width:553px;height:1px;background:#d6d6d6"></div>
<div style="left:1351px;top:521px;width:553px;height:1px;background:#d6d6d6"></div>
<div style="left:1463px;top:381px;width:1px;height:141px;background:#d6d6d6"></div>
<div style="left:1566px;top:381px;width:1px;height:141px;background:#d6d6d6"></div>
<div style="left:1641px;top:381px;width:1px;height:141px;background:#d6d6d6"></div>
<div style="left:1716px;top:381px;width:1px;height:141px;background:#d6d6d6"></div>
<div style="left:1791px;top:381px;width:1px;height:141px;background:#d6d6d6"></div>
<div style="left:1866px;top:381px;width:1px;height:141px;background:#d6d6d6"></div>
<div style="left:1351px;top:380px;width:553px;height:1px;background:#ababab"></div>
<div style="left:1351px;top:408px;width:553px;height:2px;background:#a4a4a4"></div>
<div style="left:1372px;top:358px;width:1px;height:164px;background:#ababab"></div>
<div style="left:1463px;top:358px;width:1px;height:23px;background:#ababab"></div>
<div style="left:1566px;top:358px;width:1px;height:23px;background:#ababab"></div>
<div style="left:1641px;top:358px;width:1px;height:23px;background:#ababab"></div>
<div style="left:1716px;top:358px;width:1px;height:23px;background:#ababab"></div>
<div style="left:1791px;top:358px;width:1px;height:23px;background:#ababab"></div>
<div style="left:1866px;top:358px;width:1px;height:23px;background:#ababab"></div>
<div style="left:1351px;top:437px;width:22px;height:1px;background:#ababab"></div>
<div style="left:1351px;top:465px;width:22px;height:1px;background:#ababab"></div>
<div style="left:1351px;top:493px;width:22px;height:1px;background:#ababab"></div>
<div style="left:1351px;top:521px;width:22px;height:1px;background:#ababab"></div>
<span class="t" id="t110" style="top:359px;font-size:13px;font-weight:bold;letter-spacing:-0.328px;left:1377px;">Ngày lập</span>
<span class="t" id="t111" style="top:359px;font-size:13px;font-weight:bold;letter-spacing:-0.435px;left:1468.4px;">Mã phiếu</span>
<span class="t" id="t112" style="top:359px;font-size:13px;font-weight:bold;letter-spacing:-0.328px;left:1571px;">Tổng tiền</span>
<span class="t" id="t113" style="top:359px;font-size:13px;font-weight:bold;letter-spacing:-0.585px;left:1646px;">Ghi chú</span>
<span class="t" id="t114" style="top:359px;font-size:13px;font-weight:bold;letter-spacing:-0.453px;left:1721px;">Người lập</span>
<span class="t" id="t115" style="top:359px;font-size:13px;font-weight:bold;letter-spacing:-0.270px;left:1796.3px;">Kho xuất</span>
<span class="t" id="t116" style="top:359px;font-size:13px;font-weight:bold;left:1871.3px;width:32.5px;overflow:hidden;">Kho nhận</span>
<svg style="left:1355px;top:390px" width="8" height="9" viewBox="0 0 8 9"><path d="M0.8 2.8a2.8 2.2 0 0 1 5.6 0c0 1.4-1.6 2.2-2.1 2.9V8.4H2.9V5.7C2.4 5 0.8 4.2 0.8 2.8z" fill="#000"/><ellipse cx="3.6" cy="2.4" rx="1.4" ry="0.7" fill="#fff"/></svg>
<svg style="left:1381px;top:393px" width="9" height="4" viewBox="0 0 9 4"><path d="M0 0.5h9M0 2.9h9" stroke="#555" stroke-width="1"/></svg>
<svg style="left:1575px;top:393px" width="9" height="4" viewBox="0 0 9 4"><path d="M0 0.5h9M0 2.9h9" stroke="#555" stroke-width="1"/></svg>
<div style="left:1468.5px;top:389px;width:17px;height:11px"><div style="left:4px;top:0;width:7px;height:11px;background:#1a9c32;border-radius:1px"></div></div>
<span class="t" id="t117" style="top:385px;font-size:7px;font-weight:bold;color:#555;left:1468.5px;">A</span>
<span class="t" id="t118" style="top:385px;font-size:7px;font-weight:bold;color:#fff;left:1474.1px;">B</span>
<span class="t" id="t119" style="top:385px;font-size:7px;font-weight:bold;color:#555;left:1480.9px;">C</span>
<div style="left:1646.5px;top:389px;width:17px;height:11px"><div style="left:4px;top:0;width:7px;height:11px;background:#1a9c32;border-radius:1px"></div></div>
<span class="t" id="t120" style="top:385px;font-size:7px;font-weight:bold;color:#555;left:1646.5px;">A</span>
<span class="t" id="t121" style="top:385px;font-size:7px;font-weight:bold;color:#fff;left:1652.1px;">B</span>
<span class="t" id="t122" style="top:385px;font-size:7px;font-weight:bold;color:#555;left:1658.9px;">C</span>
<div style="left:1721.5px;top:389px;width:17px;height:11px"><div style="left:4px;top:0;width:7px;height:11px;background:#1a9c32;border-radius:1px"></div></div>
<span class="t" id="t123" style="top:385px;font-size:7px;font-weight:bold;color:#555;left:1721.5px;">A</span>
<span class="t" id="t124" style="top:385px;font-size:7px;font-weight:bold;color:#fff;left:1727.1px;">B</span>
<span class="t" id="t125" style="top:385px;font-size:7px;font-weight:bold;color:#555;left:1733.9px;">C</span>
<div style="left:1796.5px;top:389px;width:17px;height:11px"><div style="left:4px;top:0;width:7px;height:11px;background:#1a9c32;border-radius:1px"></div></div>
<span class="t" id="t126" style="top:385px;font-size:7px;font-weight:bold;color:#555;left:1796.5px;">A</span>
<span class="t" id="t127" style="top:385px;font-size:7px;font-weight:bold;color:#fff;left:1802.1px;">B</span>
<span class="t" id="t128" style="top:385px;font-size:7px;font-weight:bold;color:#555;left:1808.9px;">C</span>
<div style="left:1871.5px;top:389px;width:17px;height:11px"><div style="left:4px;top:0;width:7px;height:11px;background:#1a9c32;border-radius:1px"></div></div>
<span class="t" id="t129" style="top:385px;font-size:7px;font-weight:bold;color:#555;left:1871.5px;">A</span>
<span class="t" id="t130" style="top:385px;font-size:7px;font-weight:bold;color:#fff;left:1877.1px;">B</span>
<span class="t" id="t131" style="top:385px;font-size:7px;font-weight:bold;color:#555;left:1883.9px;">C</span>
<svg style="left:1357px;top:504px" width="5" height="8" viewBox="0 0 5 8"><path d="M0.4 0L4.4 4 0.4 8z" fill="#000"/></svg>
<span class="t" id="t132" style="top:414px;font-size:13.33px;letter-spacing:0.329px;left:1377.8px;">13/10/2023</span>
<span class="t" id="t133" style="top:414px;font-size:13.33px;letter-spacing:0.283px;left:1468.4px;">NCK00005-1...</span>
<span class="t" id="t134" style="top:414px;font-size:13.33px;letter-spacing:0.300px;right:282.10px;">30,000</span>
<span class="t" id="t135" style="top:414px;font-size:13.33px;letter-spacing:-0.146px;left:1721px;">Administ...</span>
<span class="t" id="t136" style="top:414px;font-size:13.33px;letter-spacing:0.106px;left:1796.3px;">Kho chính</span>
<span class="t" id="t137" style="top:414px;font-size:13.33px;left:1871.3px;width:32.5px;overflow:hidden;">Kho Phụ 1</span>
<span class="t" id="t138" style="top:442px;font-size:13.33px;letter-spacing:0.329px;left:1377.8px;">13/10/2023</span>
<span class="t" id="t139" style="top:442px;font-size:13.33px;letter-spacing:0.283px;left:1468.4px;">NCK00004-1...</span>
<span class="t" id="t140" style="top:442px;font-size:13.33px;letter-spacing:0.300px;right:282.10px;">120,000</span>
<span class="t" id="t141" style="top:442px;font-size:13.33px;letter-spacing:-0.146px;left:1721px;">Administ...</span>
<span class="t" id="t142" style="top:442px;font-size:13.33px;letter-spacing:0.106px;left:1796.3px;">Kho chính</span>
<span class="t" id="t143" style="top:442px;font-size:13.33px;left:1871.3px;width:32.5px;overflow:hidden;">Kho Phụ 1</span>
<span class="t" id="t144" style="top:470px;font-size:13.33px;letter-spacing:0.329px;left:1377.8px;">13/10/2023</span>
<span class="t" id="t145" style="top:470px;font-size:13.33px;letter-spacing:0.283px;left:1468.4px;">NCK00003-1...</span>
<span class="t" id="t146" style="top:470px;font-size:13.33px;letter-spacing:0.300px;right:282.10px;">100,000</span>
<span class="t" id="t147" style="top:470px;font-size:13.33px;letter-spacing:-0.146px;left:1721px;">Administ...</span>
<span class="t" id="t148" style="top:470px;font-size:13.33px;letter-spacing:0.106px;left:1796.3px;">Kho chính</span>
<span class="t" id="t149" style="top:470px;font-size:13.33px;left:1871.3px;width:32.5px;overflow:hidden;">Kho Phụ 1</span>
<span class="t" id="t150" style="top:498px;font-size:13.33px;letter-spacing:0.329px;left:1377.8px;">13/10/2023</span>
<span class="t" id="t151" style="top:498px;font-size:13.33px;font-weight:bold;color:#f00;letter-spacing:0.375px;left:1468.4px;">NCK00002-...</span>
<span class="t" id="t152" style="top:498px;font-size:13.33px;letter-spacing:0.300px;right:282.10px;">3,848,000</span>
<span class="t" id="t153" style="top:498px;font-size:13.33px;letter-spacing:-0.146px;left:1721px;">Administ...</span>
<span class="t" id="t154" style="top:498px;font-size:13.33px;letter-spacing:0.106px;left:1796.3px;">Kho chính</span>
<span class="t" id="t155" style="top:498px;font-size:13.33px;left:1871.3px;width:32.5px;overflow:hidden;">Kho Phụ 1</span>
<div style="left:1351px;top:890px;width:553px;height:1px;background:#ababab"></div>
<div class="h2" style="left:1351px;top:891px;width:553px;height:33px;"></div>
<div class="hd" style="left:1351px;top:924px;width:553px;"></div>
<div class="h2" style="left:1368px;top:924px;width:483px;height:16px;background-color:#fff;border:1px solid #ababab;"></div>
<svg style="left:1357px;top:929px" width="5" height="8" viewBox="0 0 5 8"><path d="M4.4 0L0.2 4 4.4 8z" fill="#000"/></svg>
<svg style="left:1893px;top:929px" width="5" height="8" viewBox="0 0 5 8"><path d="M0.4 0L4.6 4 0.4 8z" fill="#000"/></svg>
</aside>
</body>
</html>
